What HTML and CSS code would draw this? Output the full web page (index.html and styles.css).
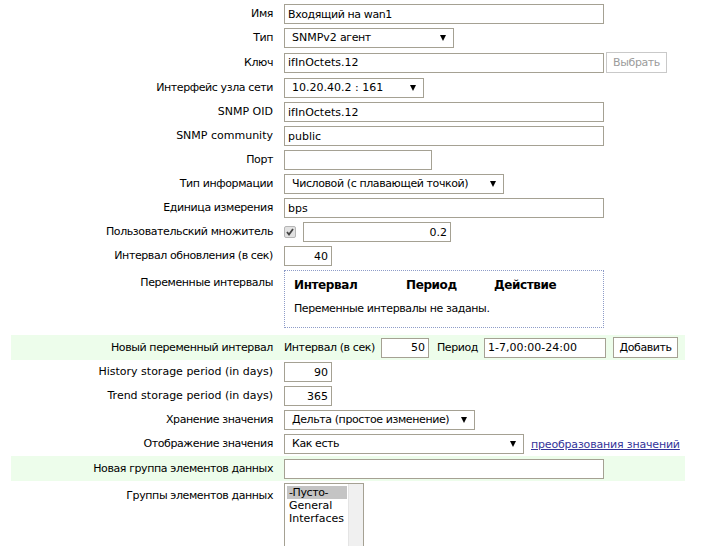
FILE: index.html
```html
<!DOCTYPE html>
<html lang="ru">
<head>
    <meta charset="UTF-8">
    <title>Элемент данных</title>
    <link rel="stylesheet" href="styles.css">
</head>
<body>
    <div class="form-list">
        <div class="row">
            <label class="label">Имя</label>
            <div class="field"><input type="text" class="input w-320" value="Входящий на wan1"></div>
        </div>
        <div class="row">
            <label class="label">Тип</label>
            <div class="field"><span class="select w-170"><span class="lat">SNMPv2</span> агент</span></div>
        </div>
        <div class="row row-key">
            <label class="label">Ключ</label>
            <div class="field">
                <input type="text" class="input lat w-320" value="ifInOctets.12">
                <button class="btn btn-disabled btn-select" disabled>Выбрать</button>
            </div>
        </div>
        <div class="row">
            <label class="label">Интерфейс узла сети</label>
            <div class="field"><span class="select lat w-140">10.20.40.2 : 161</span></div>
        </div>
        <div class="row">
            <label class="label lat">SNMP OID</label>
            <div class="field"><input type="text" class="input lat w-320" value="ifInOctets.12"></div>
        </div>
        <div class="row">
            <label class="label lat">SNMP community</label>
            <div class="field"><input type="text" class="input lat w-320" value="public"></div>
        </div>
        <div class="row">
            <label class="label">Порт</label>
            <div class="field"><input type="text" class="input w-148" value=""></div>
        </div>
        <div class="row">
            <label class="label">Тип информации</label>
            <div class="field"><span class="select w-220">Числовой (с плавающей точкой)</span></div>
        </div>
        <div class="row">
            <label class="label">Единица измерения</label>
            <div class="field"><input type="text" class="input lat w-320" value="bps"></div>
        </div>
        <div class="row">
            <label class="label">Пользовательский множитель</label>
            <div class="field">
                <span class="checkbox">
                    <svg width="8" height="8" viewBox="0 0 8 8"><path d="M1 4 L3 6.5 L7 1" fill="none" stroke="#444" stroke-width="1.8"/></svg>
                </span>
                <input type="text" class="input lat num w-148" value="0.2">
            </div>
        </div>
        <div class="row">
            <label class="label">Интервал обновления (в сек)</label>
            <div class="field"><input type="text" class="input lat num w-48" value="40"></div>
        </div>
        <div class="row row-top row-intervals">
            <label class="label">Переменные интервалы</label>
            <div class="field">
                <div class="intervals">
                    <div class="intervals-head">
                        <span>Интервал</span>
                        <span>Период</span>
                        <span>Действие</span>
                    </div>
                    <div class="intervals-empty">Переменные интервалы не заданы.</div>
                </div>
            </div>
        </div>
        <div class="row row-new">
            <label class="label">Новый переменный интервал</label>
            <div class="field">
                <span class="inline-text">Интервал (в сек)</span>
                <input type="text" class="input lat num w-48 gap-l" value="50">
                <span class="inline-text gap-l2">Период</span>
                <input type="text" class="input lat w-122 gap-l" value="1-7,00:00-24:00">
                <button class="btn btn-add">Добавить</button>
            </div>
        </div>
        <div class="row">
            <label class="label lat">History storage period (in days)</label>
            <div class="field"><input type="text" class="input lat num w-48" value="90"></div>
        </div>
        <div class="row">
            <label class="label lat">Trend storage period (in days)</label>
            <div class="field"><input type="text" class="input lat num w-48" value="365"></div>
        </div>
        <div class="row">
            <label class="label">Хранение значения</label>
            <div class="field"><span class="select w-191">Дельта (простое изменение)</span></div>
        </div>
        <div class="row">
            <label class="label">Отображение значения</label>
            <div class="field">
                <span class="select w-240">Как есть</span>
                <a href="#" class="link">преобразования значений</a>
            </div>
        </div>
        <div class="row row-new">
            <label class="label">Новая группа элементов данных</label>
            <div class="field"><input type="text" class="input w-320" value=""></div>
        </div>
        <div class="row row-top">
            <label class="label">Группы элементов данных</label>
            <div class="field">
                <div class="listbox">
                    <div class="listbox-items">
                        <div class="option selected">-Пусто-</div>
                        <div class="option lat">General</div>
                        <div class="option lat">Interfaces</div>
                    </div>
                    <div class="listbox-track"></div>
                </div>
            </div>
        </div>
    </div>
</body>
</html>
```
FILE: styles.css
```css
body {
    margin: 0;
    background-color: #fff;
    font-family: "DejaVu Sans", Verdana, sans-serif;
    font-size: 11px;
    letter-spacing: -0.4px;
    color: #000;
}
.form-list {
    width: 674px;
    margin: 2px 0 0 11px;
}
.row {
    display: grid;
    grid-template-columns: 262px 1fr;
    column-gap: 11px;
    align-items: center;
    min-height: 24px;
    padding: 2px 0;
    box-sizing: border-box;
}
.row-key {
    padding-bottom: 3px;
}
.row-top {
    align-items: start;
}
.row-top .label {
    padding-top: 6px;
}
.row-intervals {
    padding-bottom: 7px;
}
.row-new {
    background-color: #edfdeb;
    min-height: 25px;
}
.label {
    text-align: right;
    line-height: 14px;
    white-space: nowrap;
}
.field {
    display: flex;
    align-items: center;
}
.input {
    height: 20px;
    padding: 0 3px;
    border: 1px solid #a5a193;
    box-sizing: border-box;
    font-family: inherit;
    font-size: 11px;
    letter-spacing: -0.4px;
    color: #000;
    background-color: #fff;
    margin: 0;
}
.input.num {
    text-align: right;
}
.lat,
.input.lat {
    letter-spacing: 0;
}
.w-48 { width: 48px; }
.w-122 { width: 122px; }
.w-140 { width: 140px; }
.w-148 { width: 148px; }
.w-170 { width: 170px; }
.w-191 { width: 191px; }
.w-220 { width: 220px; }
.w-240 { width: 240px; }
.w-320 { width: 320px; }
.select {
    position: relative;
    display: block;
    height: 20px;
    line-height: 18px;
    padding-left: 7px;
    border: 1px solid #a5a193;
    box-sizing: border-box;
    background-color: #fff;
    white-space: nowrap;
}
.select::after {
    content: "";
    position: absolute;
    right: 7px;
    top: 6px;
    border-left: 3.5px solid transparent;
    border-right: 3.5px solid transparent;
    border-top: 6px solid #000;
}
.btn {
    height: 21px;
    padding: 0 4px;
    border: 1px solid #a5a193;
    background-color: #fff;
    font-family: inherit;
    font-size: 11px;
    letter-spacing: -0.4px;
    color: #000;
    cursor: pointer;
}
.btn-disabled {
    border-color: #c9c9c9;
    color: #9b9b9b;
    cursor: default;
}
.btn-select {
    width: 61px;
    margin-left: 2px;
}
.btn-add {
    width: 65px;
    margin-left: 7px;
}
.checkbox {
    display: flex;
    align-items: center;
    justify-content: center;
    width: 12px;
    height: 12px;
    margin-right: 7px;
    border: 1px solid #b5b5b5;
    border-radius: 2px;
    box-sizing: border-box;
    background-color: #e2e2e2;
}
.inline-text {
    white-space: nowrap;
}
.gap-l {
    margin-left: 6px;
}
.gap-l2 {
    margin-left: 8px;
}
.intervals {
    width: 320px;
    height: 58px;
    padding: 7px 9px 0;
    border: 1px dotted #8e9cc8;
    box-sizing: border-box;
}
.intervals-head {
    display: grid;
    grid-template-columns: 112px 88px auto;
    font-weight: bold;
    font-size: 12px;
    line-height: 14px;
}
.intervals-empty {
    margin-top: 10px;
    line-height: 14px;
}
.link {
    margin-left: 7px;
    color: #34349a;
    text-decoration: underline;
    letter-spacing: -0.18px;
    white-space: nowrap;
}
.listbox {
    display: flex;
    width: 80px;
    height: 80px;
    border: 1px solid #a5a193;
    box-sizing: border-box;
}
.listbox-items {
    flex: 1;
    padding: 2px 1px 0 2px;
}
.option {
    line-height: 13px;
    padding-left: 2px;
    white-space: nowrap;
}
.option.selected {
    background-color: #c4c4c4;
}
.listbox-track {
    width: 14px;
    background-color: #f0f0f0;
    border-left: 1px solid #e4e4e4;
}
```
